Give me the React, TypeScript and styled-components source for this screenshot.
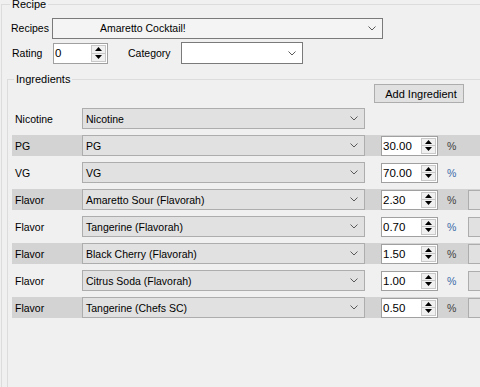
import styled, { createGlobalStyle } from 'styled-components';

const GlobalStyle = createGlobalStyle`
  html, body {
    margin: 0;
    padding: 0;
    background: #f0f0f0;
    overflow: hidden;
  }
  body {
    font-family: 'Liberation Sans', Arial, sans-serif;
    font-size: 10.5px;
    color: #000;
  }
`;

interface Ingredient {
  kind: string;
  name: string;
  amount?: string;
  extra?: boolean;
}

const ingredients: Ingredient[] = [
  { kind: 'Nicotine', name: 'Nicotine' },
  { kind: 'PG', name: 'PG', amount: '30.00' },
  { kind: 'VG', name: 'VG', amount: '70.00' },
  { kind: 'Flavor', name: 'Amaretto Sour (Flavorah)', amount: '2.30', extra: true },
  { kind: 'Flavor', name: 'Tangerine (Flavorah)', amount: '0.70', extra: true },
  { kind: 'Flavor', name: 'Black Cherry (Flavorah)', amount: '1.50', extra: true },
  { kind: 'Flavor', name: 'Citrus Soda (Flavorah)', amount: '1.00', extra: true },
  { kind: 'Flavor', name: 'Tangerine (Chefs SC)', amount: '0.50', extra: true }
];

function Chevron() {
  return (
    <svg width="8" height="5" viewBox="0 0 8 5">
      <polyline points="0.5,0.5 4,4 7.5,0.5" fill="none" stroke="#5a5a5a" strokeWidth="1" />
    </svg>
  );
}

function Spinner() {
  return (
    <SpinButtons>
      <SpinHalf>
        <svg width="7" height="4" viewBox="0 0 7 4">
          <polygon points="0,4 3.5,0 7,4" fill="#000" />
        </svg>
      </SpinHalf>
      <SpinHalf>
        <svg width="7" height="4" viewBox="0 0 7 4">
          <polygon points="0,0 3.5,4 7,0" fill="#000" />
        </svg>
      </SpinHalf>
    </SpinButtons>
  );
}

export default function App() {
  return (
    <>
      <GlobalStyle />
      <RecipeGroup>
        <Legend left={8} top={-7}>Recipe</Legend>
        <FormRow indent={9}>
          <Label width={41}>Recipes</Label>
          <EditCombo width={331} height={21} centered>
            <span>Amaretto Cocktail!</span>
            <Chevron />
          </EditCombo>
        </FormRow>
        <FormRow indent={10} top={3}>
          <Label width={41}>Rating</Label>
          <NumericBox width={55} height={21}>
            <NumberText>0</NumberText>
            <Spinner />
          </NumericBox>
          <Label width={53} gap={20}>
            Category
          </Label>
          <EditCombo width={122} height={22}>
            <span />
            <Chevron />
          </EditCombo>
        </FormRow>

        <IngredientsGroup>
          <Legend left={6} top={-7}>Ingredients</Legend>
          <AddButton>Add Ingredient</AddButton>
          <RowList>
            {ingredients.map((item, i) => (
              <IngredientRow key={i} shaded={i % 2 === 1}>
                <Label width={67}>{item.kind}</Label>
                <ListCombo>
                  <span>{item.name}</span>
                  <Chevron />
                </ListCombo>
                {item.amount && (
                  <>
                    <NumericBox width={57} height={20} gap={16}>
                      <NumberText>{item.amount}</NumberText>
                      <Spinner />
                    </NumericBox>
                    <Percent shaded={i % 2 === 1}>%</Percent>
                  </>
                )}
                {item.extra && <SideButton />}
              </IngredientRow>
            ))}
          </RowList>
        </IngredientsGroup>
      </RecipeGroup>
    </>
  );
}

const RecipeGroup = styled.div`
  position: relative;
  margin: 4px 0 0 1px;
  height: 383px;
  box-sizing: border-box;
  border-top: 1px solid #dcdcdc;
  border-left: 1px solid #dcdcdc;
  padding-top: 12px;
  display: flex;
  flex-direction: column;
`;

const Legend = styled.div<{ left: number; top: number }>`
  position: absolute;
  top: ${p => p.top}px;
  left: ${p => p.left}px;
  padding: 0 2px;
  background: #f0f0f0;
  font-size: 11px;
  line-height: 13px;
`;

const FormRow = styled.div<{ indent: number; top?: number }>`
  display: flex;
  align-items: center;
  padding-left: ${p => p.indent}px;
  margin-top: ${p => p.top ?? 0}px;
  height: 22px;
`;

const Label = styled.div<{ width: number; gap?: number }>`
  width: ${p => p.width}px;
  margin-left: ${p => p.gap ?? 0}px;
  flex: none;
  white-space: nowrap;
`;

const EditCombo = styled.div<{ width: number; height: number; centered?: boolean }>`
  width: ${p => p.width}px;
  height: ${p => p.height}px;
  box-sizing: border-box;
  border: 1px solid #7a7a7a;
  background: ${p => (p.centered ? '#f4f4f4' : '#fff')};
  display: flex;
  align-items: center;
  justify-content: space-between;
  padding: 0 6px 0 ${p => (p.centered ? 47 : 3)}px;
  flex: none;
`;

const NumericBox = styled.div<{ width: number; height: number; gap?: number }>`
  width: ${p => p.width}px;
  height: ${p => p.height}px;
  margin-left: ${p => p.gap ?? 0}px;
  box-sizing: border-box;
  border: 1px solid #a0a0a0;
  background: #fff;
  display: flex;
  align-items: stretch;
  flex: none;
`;

const NumberText = styled.div`
  flex: 1;
  padding-left: 1px;
  display: flex;
  align-items: center;
  font-size: 11.5px;
`;

const SpinButtons = styled.div`
  width: 15px;
  display: flex;
  flex-direction: column;
  padding: 1px 1px 1px 0;
`;

const SpinHalf = styled.div`
  flex: 1;
  display: flex;
  align-items: center;
  justify-content: center;
  border: 1px solid #c8c8c8;
  background: #f0f0f0;
  & + & {
    border-top: none;
  }
`;

const IngredientsGroup = styled.div`
  position: relative;
  margin: 15px 0 0 5px;
  flex: 1;
  border-top: 1px solid #dcdcdc;
  border-left: 1px solid #dcdcdc;
  padding-top: 4px;
  display: flex;
  flex-direction: column;
`;

const AddButton = styled.button`
  margin-left: 366px;
  width: 90px;
  height: 19px;
  box-sizing: border-box;
  border: 1px solid #adadad;
  background: #e1e1e1;
  font-family: 'Liberation Sans', Arial, sans-serif;
  font-size: 11px;
  color: #000;
  padding: 0 0 0 4px;
  text-align: center;
`;

const RowList = styled.div`
  margin: 5px 0 0 4px;
  display: flex;
  flex-direction: column;
  gap: 6px;
`;

const IngredientRow = styled.div<{ shaded: boolean }>`
  display: flex;
  align-items: center;
  height: 21px;
  padding-left: 3px;
  width: 500px;
  background: ${p => (p.shaded ? '#d3d3d3' : 'transparent')};
`;

const ListCombo = styled.div`
  width: 283px;
  height: 21px;
  box-sizing: border-box;
  border: 1px solid #adadad;
  background: #e1e1e1;
  display: flex;
  align-items: center;
  justify-content: space-between;
  padding: 0 6px 0 3px;
  flex: none;
`;

const Percent = styled.div<{ shaded: boolean }>`
  margin-left: 9px;
  width: 21px;
  flex: none;
  color: ${p => (p.shaded ? '#404040' : '#3a6aa8')};
`;

const SideButton = styled.div`
  width: 40px;
  height: 20px;
  box-sizing: border-box;
  border: 1px solid #adadad;
  background: #e1e1e1;
  flex: none;
`;
